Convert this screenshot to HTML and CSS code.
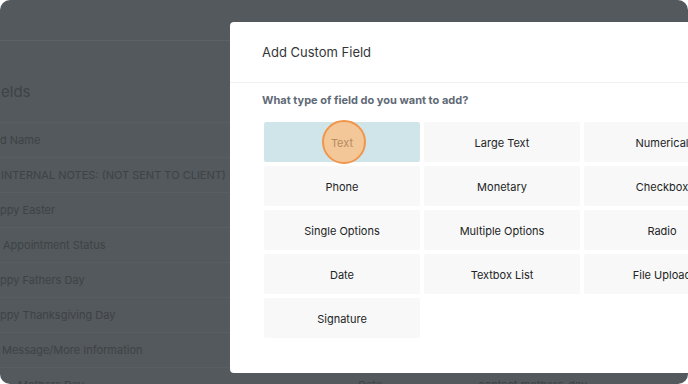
FILE: index.html
```html
<!DOCTYPE html>
<html>
<head>
<meta charset="utf-8">
<link rel="stylesheet" href="styles.css">
</head>
<body>
<div class="frame">
  <div class="page">
    <div class="topbar"></div>
    <div class="page-title">elds</div>
    <div class="table">
      <div class="row head"><span class="c1">d Name</span></div>
      <div class="row"><span class="c1 i1">INTERNAL NOTES: (NOT SENT TO CLIENT)</span></div>
      <div class="row"><span class="c1">ppy Easter</span></div>
      <div class="row"><span class="c1 i3">Appointment Status</span></div>
      <div class="row"><span class="c1">ppy Fathers Day</span></div>
      <div class="row"><span class="c1">ppy Thanksgiving Day</span></div>
      <div class="row"><span class="c1 i2">Message/More Information</span></div>
      <div class="row"><span class="c1 i18">Mothers Day</span><span class="c2">Date</span><span class="c3">contact.mothers_day</span></div>
    </div>
  </div>

  <div class="overlay">
    <div class="modal">
      <div class="modal-head">Add Custom Field</div>
      <div class="modal-body">
        <div class="question">What type of field do you want to add?</div>
        <div class="grid">
          <div class="cell selected"><span class="click"></span><span class="label">Text</span></div>
          <div class="cell"><span class="label">Large Text</span></div>
          <div class="cell"><span class="label">Numerical</span></div>
          <div class="cell"><span class="label">Phone</span></div>
          <div class="cell"><span class="label">Monetary</span></div>
          <div class="cell"><span class="label">Checkbox</span></div>
          <div class="cell"><span class="label">Single Options</span></div>
          <div class="cell"><span class="label">Multiple Options</span></div>
          <div class="cell"><span class="label">Radio</span></div>
          <div class="cell"><span class="label">Date</span></div>
          <div class="cell"><span class="label">Textbox List</span></div>
          <div class="cell"><span class="label">File Upload</span></div>
          <div class="cell"><span class="label">Signature</span></div>
        </div>
      </div>
    </div>
  </div>
</div>
</body>
</html>
```

FILE: styles.css
```css
* { box-sizing: border-box; }
html, body { margin: 0; padding: 0; background: #ffffff; }
body { font-family: Inter, "Noto Sans", sans-serif; }

.frame {
  position: relative;
  width: 688px;
  height: 384px;
  border-radius: 10px;
  overflow: hidden;
  background: #53595c;
}

.page {
  display: flex;
  flex-direction: column;
  color: #3e4346;
}
.topbar {
  height: 41px;
  border-bottom: 1px solid #5c6265;
}
.page-title {
  height: 81px;
  padding-top: 41px;
  line-height: 20px;
  font-size: 15px;
  padding-left: 1px;
}
.table { display: flex; flex-direction: column; }
.row {
  height: 35px;
  border-top: 1px solid #585e61;
  display: flex;
  align-items: center;
  font-size: 11px;
  position: relative;
}
.c1 { padding-left: 0; }
.i1 { padding-left: 1px; }
.i2 { padding-left: 2px; }
.i3 { padding-left: 3px; }
.i18 { padding-left: 18px; }
.c2 { margin-left: 274px; }
.c3 { margin-left: 96px; }

.overlay {
  position: absolute;
  inset: 0;
}
.modal {
  position: absolute;
  left: 230px;
  top: 22px;
  width: 470px;
  height: 351px;
  background: #ffffff;
  border-radius: 4px;
}
.modal-head {
  height: 61px;
  display: flex;
  align-items: center;
  padding-left: 32px;
  font-size: 13px;
  color: #333638;
  border-bottom: 1px solid #eef0f2;
}
.modal-body {
  padding: 10px 0 0 32px;
}
.question {
  font-size: 11px;
  line-height: 14px;
  font-weight: 700;
  color: #5f6a76;
  margin-bottom: 15px;
}
.grid {
  margin-left: 2px;
  display: grid;
  grid-template-columns: repeat(3, 156px);
  grid-auto-rows: 40px;
  gap: 4px;
}
.cell {
  position: relative;
  background: #f8f8f8;
  border-radius: 2px;
  display: flex;
  align-items: center;
  justify-content: center;
  padding-top: 2px;
  font-size: 11px;
  color: #222425;
}
.cell.selected { background: #cfe5ea; }
.cell.selected .label { color: #b48b62; position: relative; }
.click {
  position: absolute;
  left: 58px;
  top: -2px;
  width: 44px;
  height: 44px;
  border-radius: 50%;
  background: #f3c797;
  border: 2px solid #f0964a;
}
```
